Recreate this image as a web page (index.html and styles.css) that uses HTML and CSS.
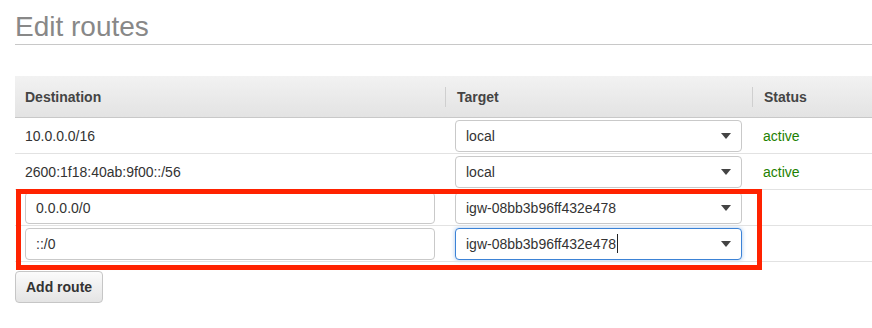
FILE: index.html
```html
<!DOCTYPE html>
<html lang="en">
<head>
    <meta charset="UTF-8">
    <meta name="viewport" content="width=device-width, initial-scale=1.0">
    <title>Edit routes</title>
    <link rel="stylesheet" href="styles.css">
</head>
<body>
    <div class="page">
        <h1 class="page-title">Edit routes</h1>
        <table class="routes">
            <thead>
                <tr>
                    <th class="col-dest">Destination</th>
                    <th class="col-target">Target</th>
                    <th class="col-status">Status</th>
                </tr>
            </thead>
            <tbody>
                <tr>
                    <td class="cell-text">10.0.0.0/16</td>
                    <td>
                        <div class="combo">
                            <span class="combo-value">local</span>
                            <svg class="combo-arrow" width="10" height="6" viewBox="0 0 10 6"><path d="M0 0h10L5 6z"/></svg>
                        </div>
                    </td>
                    <td class="status">active</td>
                </tr>
                <tr>
                    <td class="cell-text">2600:1f18:40ab:9f00::/56</td>
                    <td>
                        <div class="combo">
                            <span class="combo-value">local</span>
                            <svg class="combo-arrow" width="10" height="6" viewBox="0 0 10 6"><path d="M0 0h10L5 6z"/></svg>
                        </div>
                    </td>
                    <td class="status">active</td>
                </tr>
                <tr>
                    <td><div class="field">0.0.0.0/0</div></td>
                    <td>
                        <div class="combo">
                            <span class="combo-value">igw-08bb3b96ff432e478</span>
                            <svg class="combo-arrow" width="10" height="6" viewBox="0 0 10 6"><path d="M0 0h10L5 6z"/></svg>
                        </div>
                    </td>
                    <td></td>
                </tr>
                <tr>
                    <td><div class="field">::/0</div></td>
                    <td>
                        <div class="combo combo-focus">
                            <span class="combo-value">igw-08bb3b96ff432e478<span class="caret"></span></span>
                            <svg class="combo-arrow" width="10" height="6" viewBox="0 0 10 6"><path d="M0 0h10L5 6z"/></svg>
                        </div>
                    </td>
                    <td></td>
                </tr>
            </tbody>
        </table>
        <button type="button" class="btn">Add route</button>

        <!-- annotation over the new routes -->
        <div class="highlight"></div>
    </div>
</body>
</html>
```

FILE: styles.css
```css
body {
    margin: 0;
    font-family: "Liberation Sans", Arial, sans-serif;
    font-size: 14px;
    color: #333;
    background: #fff;
}
.page {
    position: relative;
    padding: 11px 0 0 15px;
}
.page-title {
    margin: 0;
    padding-bottom: 1px;
    font-size: 28px;
    font-weight: normal;
    line-height: 32px;
    color: #888;
    border-bottom: 1px solid #c8c8c8;
}
.routes {
    width: 100%;
    margin-top: 31px;
    border-collapse: collapse;
    table-layout: fixed;
}
.routes th {
    height: 41px;
    padding: 0 0 0 12px;
    text-align: left;
    font-weight: bold;
    color: #444;
    background: linear-gradient(#f2f2f2, #e3e3e3);
    border-bottom: 1px solid #c8c8c8;
}
.routes th + th {
    background:
        linear-gradient(#cfcfcf, #cfcfcf) no-repeat 0 center / 1px 20px,
        linear-gradient(#f2f2f2, #e3e3e3);
}
.routes th.col-dest {
    padding-left: 10px;
}
.col-dest {
    width: 420px;
}
.col-target {
    width: 295px;
}
.routes td {
    height: 35px;
    padding: 0 10px;
    border-bottom: 1px solid #e2e2e2;
}
.routes td.status {
    padding-left: 11px;
    color: #1d8102;
}
.field,
.combo {
    box-sizing: border-box;
    height: 32px;
    padding: 0 10px;
    display: flex;
    align-items: center;
    border: 1px solid #c9c9c9;
    border-radius: 4px;
    background: #fff;
    color: #333;
}
.combo {
    justify-content: space-between;
}
.combo-arrow {
    fill: #444;
}
.combo-focus {
    border-color: #3b82d6;
    box-shadow: 0 0 4px rgba(59, 130, 214, 0.45);
}
.caret {
    display: inline-block;
    width: 1px;
    height: 19px;
    margin-left: 1px;
    vertical-align: -4px;
    background: #222;
}
.btn {
    margin-top: 9px;
    height: 32px;
    padding: 0 10px;
    font-family: inherit;
    font-size: 14px;
    font-weight: bold;
    color: #333;
    background: linear-gradient(#fbfbfb, #e4e4e4);
    border: 1px solid #c6c6c6;
    border-radius: 4px;
    cursor: pointer;
}
.highlight {
    position: absolute;
    left: 16px;
    top: 189px;
    width: 746px;
    height: 81px;
    box-sizing: border-box;
    border: 5px solid #ff2200;
    pointer-events: none;
}
```
